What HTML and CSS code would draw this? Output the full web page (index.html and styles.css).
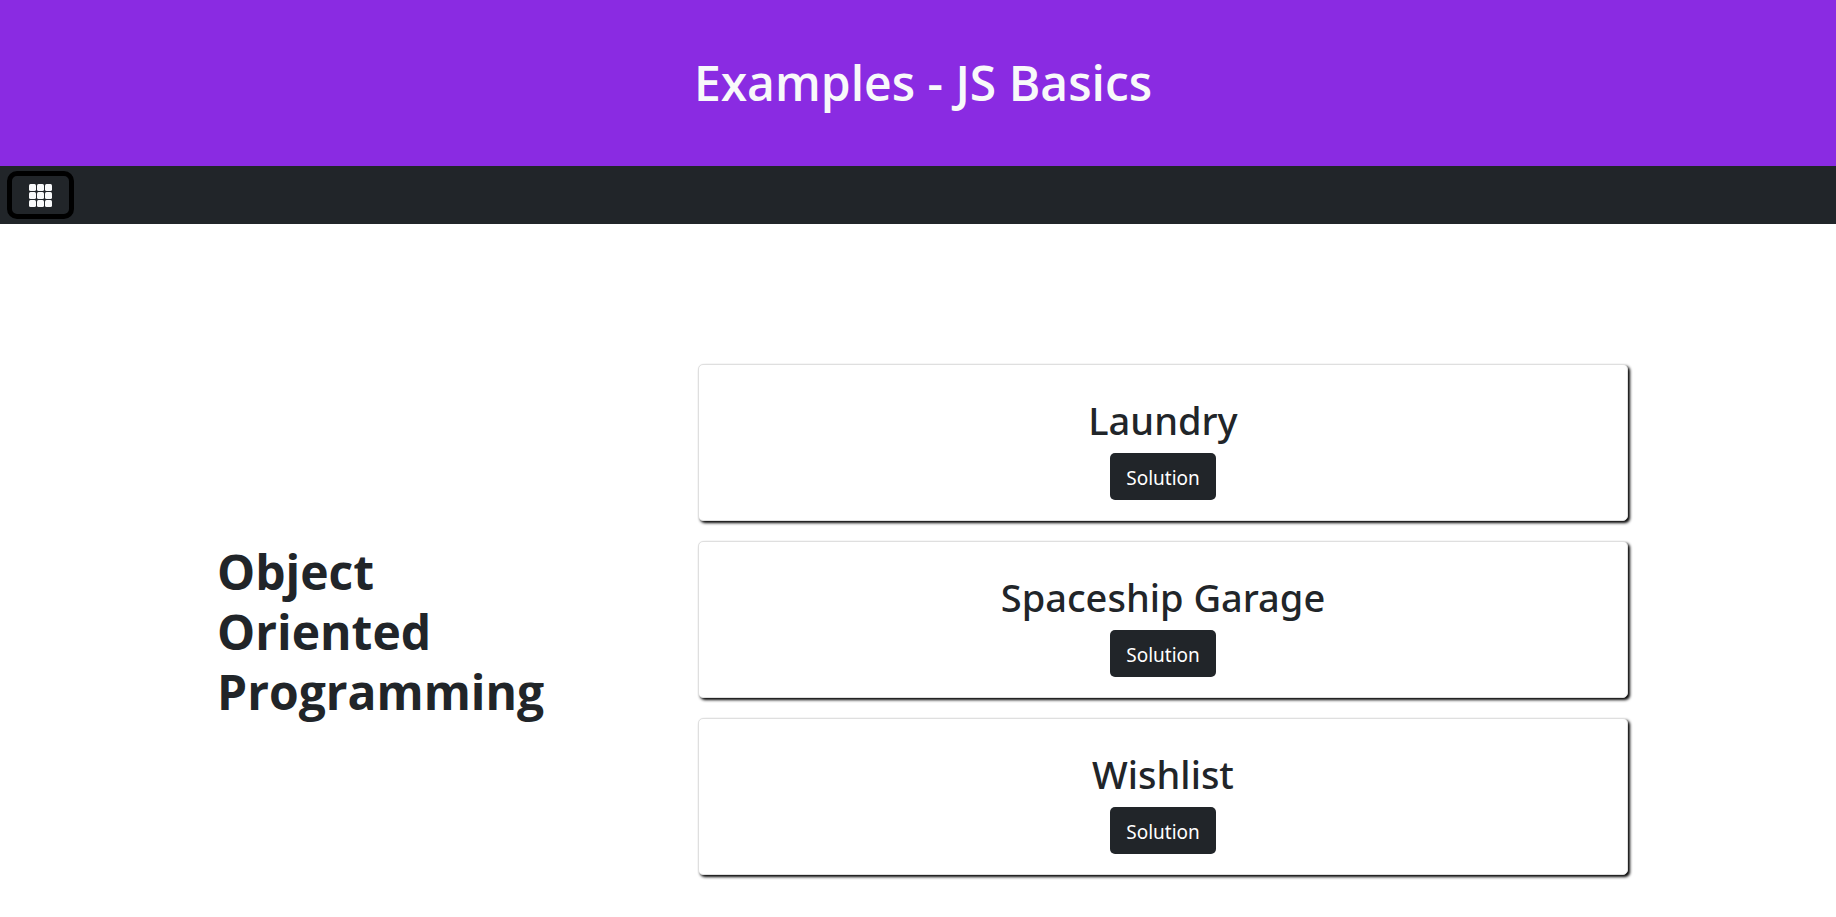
FILE: index.html
```html
<!DOCTYPE html>
<html lang="en">
<head>
  <meta charset="utf-8">
  <title>Examples - JS Basics</title>
  <link rel="stylesheet" href="styles.css">
</head>
<body>
  <header class="banner">
    <h1 class="banner-title">Examples - JS Basics</h1>
  </header>
  <nav class="toolbar" aria-label="Main">
    <button class="menu-button" type="button" aria-label="Open menu">
      <svg class="menu-icon" viewBox="0 0 23 23" aria-hidden="true">
        <g fill="#f8f9fa">
          <rect x="0" y="0" width="7" height="7" rx="1.5"/>
          <rect x="8" y="0" width="7" height="7" rx="1.5"/>
          <rect x="16" y="0" width="7" height="7" rx="1.5"/>
          <rect x="0" y="8" width="7" height="7" rx="1.5"/>
          <rect x="8" y="8" width="7" height="7" rx="1.5"/>
          <rect x="16" y="8" width="7" height="7" rx="1.5"/>
          <rect x="0" y="16" width="7" height="7" rx="1.5"/>
          <rect x="8" y="16" width="7" height="7" rx="1.5"/>
          <rect x="16" y="16" width="7" height="7" rx="1.5"/>
        </g>
      </svg>
    </button>
  </nav>
  <main class="content">
    <h2 class="topic">Object Oriented Programming</h2>
    <div class="cards">
      <article class="card">
        <h3 class="card-title">Laundry</h3>
        <a class="solution" href="#laundry">Solution</a>
      </article>
      <article class="card">
        <h3 class="card-title">Spaceship Garage</h3>
        <a class="solution" href="#spaceship-garage">Solution</a>
      </article>
      <article class="card">
        <h3 class="card-title">Wishlist</h3>
        <a class="solution" href="#wishlist">Solution</a>
      </article>
    </div>
  </main>
</body>
</html>
```

FILE: styles.css
```css
* {
  box-sizing: border-box;
}

body {
  margin: 0;
  background: #fff;
  color: #212529;
  font-family: "Segoe UI", "Noto Sans", "Open Sans", sans-serif;
  font-size: 20px;
  line-height: 30px;
}

h1,
h2,
h3 {
  margin: 0;
}

.banner {
  padding: 53px 0 53px 10px;
  background: #8a2be2;
  color: #f8f9fa;
  text-align: center;
}

.banner-title {
  font-family: "Segoe UI", "Open Sans", sans-serif;
  font-size: 48px;
  font-weight: 600;
  line-height: 60px;
}

.toolbar {
  display: flex;
  padding: 5px 7px;
  background: #212529;
}

.menu-button {
  display: flex;
  align-items: center;
  justify-content: center;
  width: 67px;
  height: 48px;
  padding: 0;
  border: 5px solid #000;
  border-radius: 10px;
  background: #212529;
}

.menu-icon {
  width: 23px;
  height: 23px;
}

.content {
  display: grid;
  grid-template-columns: 492fr 930fr;
  align-items: center;
  padding: 140px 208px 0 206px;
}

.topic {
  padding: 4px 140px 0 11px;
  font-family: "Segoe UI", "Open Sans", sans-serif;
  font-size: 48px;
  font-weight: 700;
  line-height: 60px;
}

.card {
  display: flex;
  flex-direction: column;
  align-items: center;
  gap: 9px;
  margin-bottom: 20px;
  padding: 31px 20px 20px;
  border: 1px solid #dfdfdf;
  border-radius: 5px;
  box-shadow: 2px 2px 3px #000;
  background: #fff;
}

.card-title {
  font-size: 38px;
  font-weight: 500;
  line-height: 48px;
}

.solution {
  padding: 10px 16px 7px;
  border-radius: 5px;
  background: #212529;
  color: #fff;
  font-size: 19px;
  text-decoration: none;
}
```
